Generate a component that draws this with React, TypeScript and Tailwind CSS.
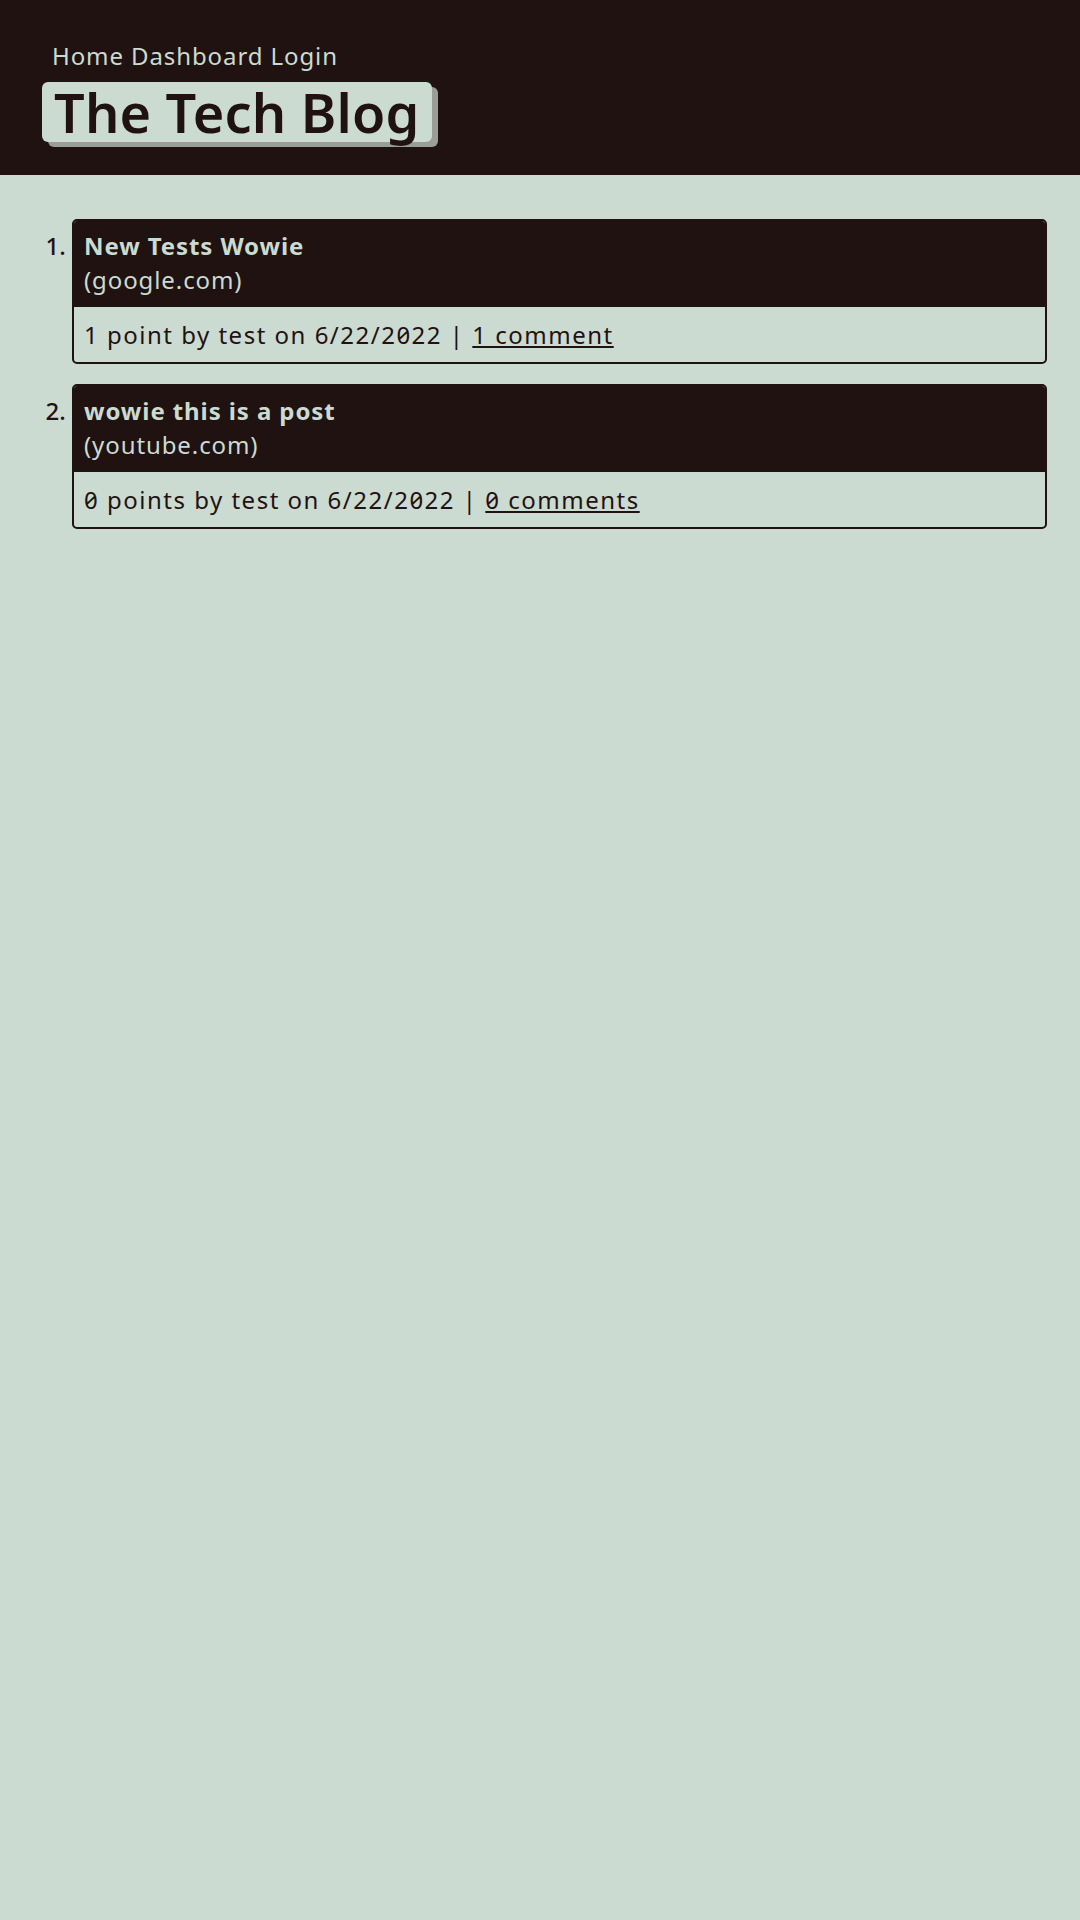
import React from "react";

const posts = [
  { title: "New Tests Wowie", domain: "google.com", meta: "1 point by test on 6/22/2022", comments: "1 comment" },
  { title: "wowie this is a post", domain: "youtube.com", meta: "0 points by test on 6/22/2022", comments: "0 comments" },
];

export default function App() {
  return (
    <div className="min-h-screen bg-[#cbdbd1] text-[#1f1211] font-['Noto_Sans',sans-serif] [font-feature-settings:'zero']">
      <header className="h-[175px] bg-[#1f1211] pl-[42px] pt-[38px]">
        <nav className="pl-[10px] text-[24px] leading-[36px] tracking-[0.9px] text-[#cbdbd1]">
          <a href="#">Home</a> <a href="#">Dashboard</a> <a href="#">Login</a>
        </nav>
        <h1 className="mt-[8px] inline-block rounded-[6px] bg-[#cbdbd1] px-[12px] text-[54px] font-semibold leading-[60px] tracking-[0.2px] text-[#1f1211] shadow-[6px_5px_0_#9b9d99]">
          The Tech Blog
        </h1>
      </header>
      <main className="pt-[44px] pl-[72px] pr-[33px]">
        <ol className="list-decimal">
          {posts.map((p) => (
            <li key={p.title} className="mb-[20px] pl-0 text-[24px] marker:text-[#1f1211] marker:font-medium">
              <div className="overflow-hidden rounded-[5px] border-2 border-[#1f1211]">
                <div className="bg-[#1f1211] px-[10px] pt-[8px] pb-[10px] text-[#cbdbd1] leading-[34px] tracking-[0.9px]">
                  <div className="font-bold">{p.title}</div>
                  <div>({p.domain})</div>
                </div>
                <div className="px-[10px] py-[10px] leading-[35px] tracking-[1.5px]">
                  {p.meta} | <a href="#" className="underline">{p.comments}</a>
                </div>
              </div>
            </li>
          ))}
        </ol>
      </main>
    </div>
  );
}
